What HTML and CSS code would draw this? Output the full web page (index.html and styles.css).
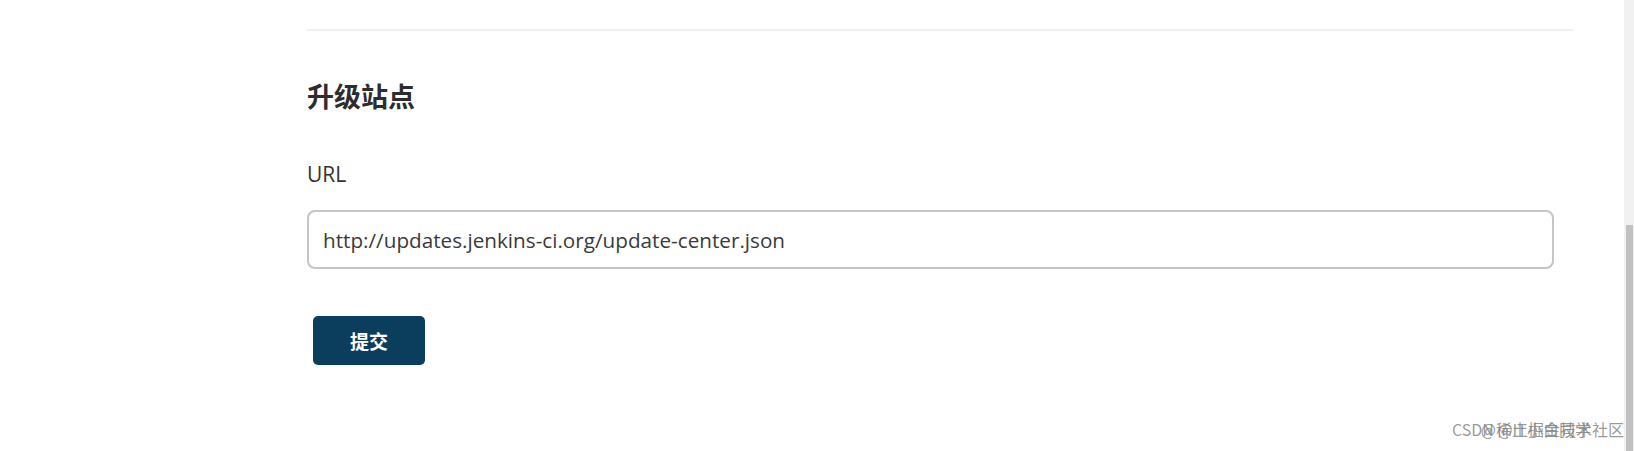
FILE: index.html
```html
<!DOCTYPE html>
<html lang="zh-CN">
<head>
<meta charset="utf-8">
<title>升级站点</title>
<link rel="stylesheet" href="styles.css">
</head>
<body>
<div class="page">
  <main class="main">
    <div class="content">
      <hr class="divider">
      <h2 class="section-title">升级站点</h2>
      <form class="site-form">
        <label class="field-label" for="site-url">URL</label>
        <input class="field-input" id="site-url" type="text" value="http://updates.jenkins-ci.org/update-center.json">
        <div class="actions">
          <button class="btn-primary" type="button">提交</button>
        </div>
      </form>
    </div>
  </main>
  <aside class="scrollbar">
    <div class="scroll-thumb"></div>
  </aside>
</div>
<div class="watermark">
  <span class="wm-a">CSDN @IT小白同学</span>
  <span class="wm-b">@稀土掘金技术社区</span>
</div>
</body>
</html>
```
FILE: styles.css
```css
html, body {
  margin: 0;
  padding: 0;
  background: #ffffff;
  height: 100%;
}
body {
  font-family: "Open Sans", "Noto Sans", "Noto Sans CJK SC", sans-serif;
  color: #333333;
  overflow: hidden;
}
.page {
  display: flex;
  height: 451px;
}
.main {
  flex: 1;
  padding-left: 307px;
  padding-right: 51px;
}
.content {
  display: flex;
  flex-direction: column;
}
.divider {
  margin: 29px 0 0 0;
  border: 0;
  height: 2px;
  background: #f0f0f0;
}
.section-title {
  margin: 47px 0 0 0;
  font-family: "Noto Sans CJK SC", sans-serif;
  font-size: 27px;
  font-weight: 700;
  line-height: 36px;
  color: #2d2d2d;
}
.site-form {
  display: flex;
  flex-direction: column;
  align-items: flex-start;
}
.field-label {
  margin-top: 46px;
  font-size: 21px;
  line-height: 28px;
  color: #333333;
}
.field-input {
  box-sizing: border-box;
  margin-top: 22px;
  width: 1247px;
  height: 59px;
  padding: 0 14px;
  border: 2px solid #c4c5c7;
  border-radius: 8px;
  font-family: "Open Sans", "Noto Sans", sans-serif;
  font-size: 20.7px;
  color: #3a3a3a;
  background: #ffffff;
  outline: none;
}
.actions {
  margin-top: 47px;
  padding-left: 6px;
}
.btn-primary {
  width: 112px;
  height: 49px;
  border: 0;
  border-radius: 5px;
  background: #0b3d5d;
  color: #ffffff;
  font-family: "Noto Sans CJK SC", sans-serif;
  font-size: 19px;
  font-weight: 700;
  cursor: pointer;
}
.scrollbar {
  width: 10px;
  background: #f1f1f1;
  display: flex;
  flex-direction: column;
  padding-top: 225px;
  padding-left: 2px;
  box-sizing: border-box;
}
.scroll-thumb {
  flex: 1;
  width: 7px;
  background: #c1c1c1;
}
.watermark {
  position: absolute;
  right: 10px;
  bottom: 12px;
  width: 172px;
  height: 20px;
  font-family: "Noto Sans CJK SC", sans-serif;
  font-size: 16px;
  line-height: 20px;
  color: rgba(120, 120, 120, 0.75);
  white-space: nowrap;
}
.wm-a {
  position: absolute;
  left: 0;
  top: 0;
}
.wm-b {
  position: absolute;
  right: 0;
  top: 0;
}
```
